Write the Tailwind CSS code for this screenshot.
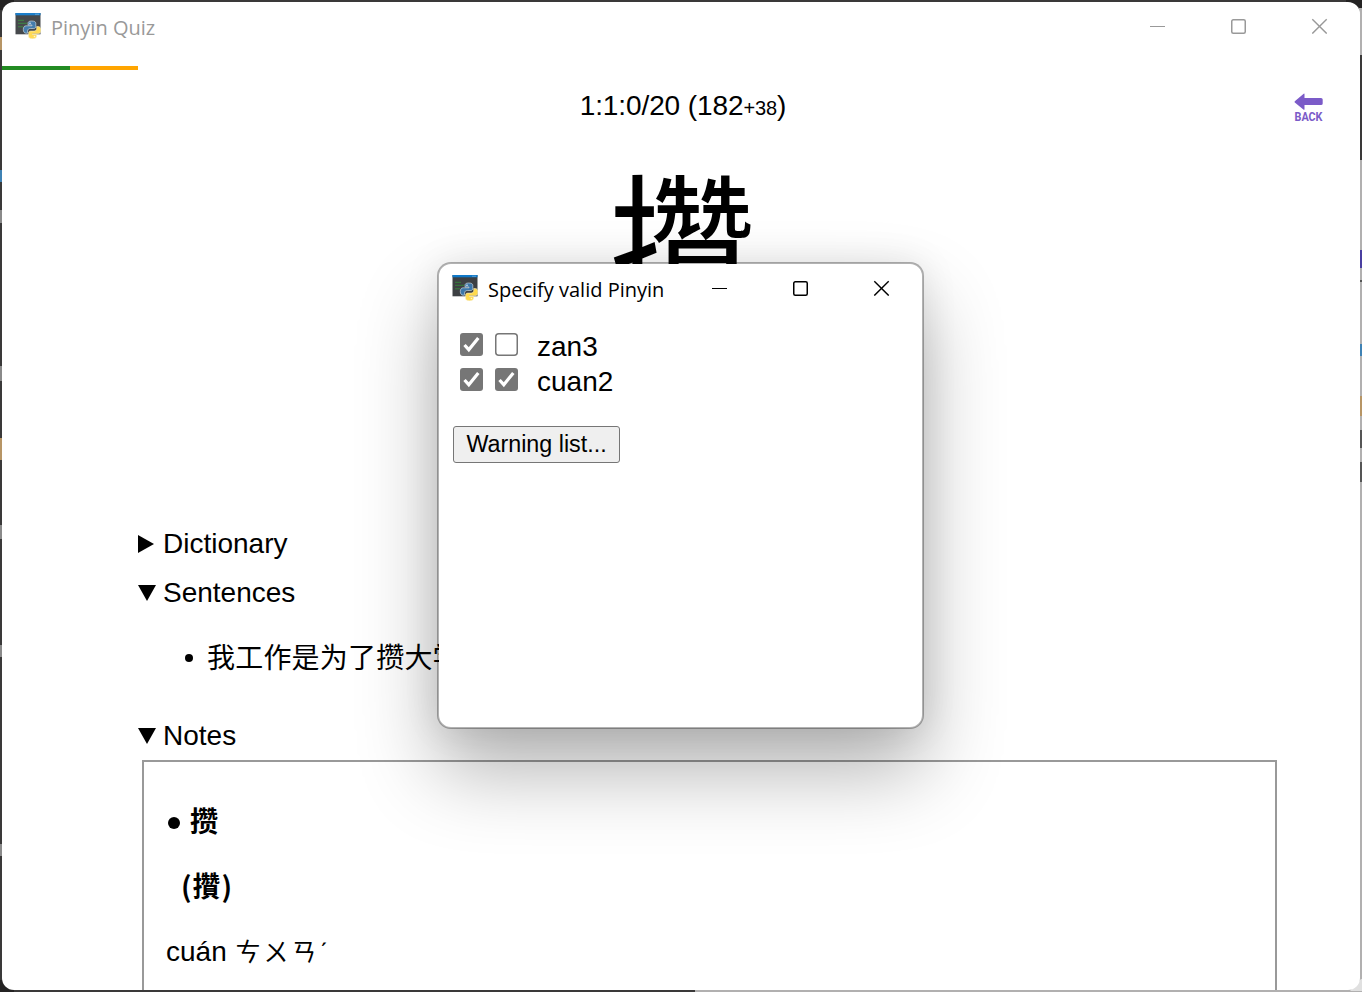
<!DOCTYPE html>
<html lang="en">
<head>
<meta charset="utf-8">
<title>Pinyin Quiz</title>
<script src="https://cdn.jsdelivr.net/npm/@tailwindcss/browser@4"></script>
</head>
<body class="relative h-[992px] w-[1362px] overflow-hidden bg-[#3a3939] p-[2px] font-['Liberation_Sans','Noto_Sans_CJK_SC',sans-serif] text-[28px] leading-8 text-black">
<svg class="absolute top-0 left-0" width="1362" height="992">
  <path fill="#242323" d="M0 0h14v10H0zM1346 0h16v12h-16zM0 980h14v12H0z"/>
  <path fill="#b1b0b0" d="M1359 8h3v47h-3zM1359 160h3v832h-3zM695 989h667v3H695z"/>
  <path fill="#e0e0e0" d="M1350 991h12v-12h-1z"/>
  <path fill="#b79565" d="M0 37h2v13H0zM0 438h2v22H0zM1360 396h2v20h-2z"/>
  <path fill="#3f82b4" d="M0 170h2v12H0zM1360 344h2v12h-2z"/>
  <path fill="#8a8a8a" d="M0 210h2v13H0zM0 366h2v15H0zM0 525h2v14H0zM0 645h2v12H0zM0 844h2v12H0z"/>
  <path fill="#4a3fa0" d="M1360 250h2v18h-2z"/>
  <path fill="#555" d="M1360 280h2v2h-2zM1360 430h2v18h-2zM1360 462h2v20h-2z"/>
</svg>
<svg class="hidden">
  <symbol id="app" viewBox="0 0 26 26">
    <path fill="#3d4043" d="M.5 0h25v21.300H.5z"/><path fill="#0f78c8" d="M.5 0h25v2.300H.5z"/>
    <path fill="#9cc8e8" d="M20.500.8h1v1h-1zM22.500.8h1v1h-1z"/>
    <path stroke="#35803a" fill="none" d="M3 7.300h6M3 10.300h9M3 13.800h5"/>
    <path fill="#3c76a8" stroke="#dbe8ee" stroke-width=".6" d="M16.500 8c-2.600 0-3.500 1-3.500 2.400V12h4v.8h-5.800c-2 0-2.900 1.500-2.900 3.700s1 3.700 2.700 3.700h1.600v-2.200c0-1.600 1.200-2.500 2.700-2.500h3.400c1.300 0 2.100-.8 2.100-2.100v-3c0-1.600-1.300-2.400-4.300-2.400z"/>
    <path fill="#ffd94c" stroke="#f7ecc0" stroke-width=".6" d="M17.500 25.700c2.600 0 4-1 4-2.400v-1.700h-4v-.8h5.500c2 0 2.800-1.500 2.800-3.700s-1-3.600-2.600-3.600h-1.500v2.100c0 1.600-1.100 2.500-2.600 2.500h-3.400c-1.300 0-2.100.8-2.100 2.100v3.100c0 1.500 1.300 2.400 3.900 2.400z"/>
    <circle cx="15" cy="10.200" r=".8" fill="#e8f2f8"/><circle cx="19.500" cy="23.500" r=".8" fill="#fff5cf"/>
  </symbol>
  <symbol id="controls" viewBox="0 0 178 16">
    <path fill="none" stroke="currentColor" d="M0 8.500h15"/>
    <rect x="81.750" y="1.750" width="13.500" height="13.500" rx="1.500" fill="none" stroke="currentColor" stroke-width="1.500"/>
    <path fill="none" stroke="currentColor" stroke-width="1.400" d="M162.300 1.200l14.400 14.400M176.700 1.200l-14.400 14.400"/>
  </symbol>
</svg>

<main class="relative h-[988px] w-[1358px] overflow-hidden rounded-xl bg-white">
  <header class="flex h-16 items-start pl-[13px] text-[#999]">
    <svg class="mt-[11px] size-[26px] opacity-95"><use href="#app"/></svg>
    <h1 class="mt-[10px] ml-[10px] font-['Open_Sans'] text-[20px] leading-8">Pinyin Quiz</h1>
    <svg class="mt-4 mr-[32px] ml-auto h-4 w-[178px]"><use href="#controls"/></svg>
  </header>
  <div class="flex h-1"><div class="w-[68px] bg-[#228b22]"></div><div class="w-[68px] bg-[#ffa500]"></div></div>
  <div class="grid h-[52px] grid-cols-[1fr_auto_1fr] pt-[20px] pl-[4px]">
    <p class="col-start-2 h-8 tracking-[-0.1px]">1:1:0/20 (182<span class="text-[20px]">+38</span>)</p>
    <button class="mr-[35px] h-10 w-[33px] justify-self-end pt-[2px]">
      <svg class="overflow-visible" width="33" height="36" viewBox="-2 0 33 36"><path fill="#7b5bc8" d="M.8 8.300 9.700.7q.8-.5.8.5V5h16.500q1.700 0 1.700 1.500v4q0 1.500-1.700 1.500H10.500v4.200q0 1-.8.500L.8 9.600q-.6-.7 0-1.300z"/><text x=".5" y="28" textLength="28" lengthAdjust="spacingAndGlyphs" font-family="Roboto" font-size="12.700" font-weight="700" fill="#7b5bc8">BACK</text></svg>
    </button>
  </div>
  <div class="h-[397px] pt-[32px] text-center font-['Noto_Sans_CJK_TC',sans-serif] text-[150px] leading-[160px] font-normal"><span class="inline-block translate-x-[2px] translate-y-[4px] scale-y-[1.03]">攢</span></div>
  <section class="pl-[136px]">
    <div class="flex h-[49px] items-center"><svg class="mr-[9px]" width="16" height="18"><path d="M0 0l16 9-16 9z"/></svg>Dictionary</div>
    <div class="flex h-[49px] items-center"><svg class="mr-[7px]" width="18" height="16"><path d="M0 0h18L9 16z"/></svg>Sentences</div>
    <div class="flex h-[82px] items-center pl-[47px]"><span class="mr-[14px] size-2 rounded-full bg-black"></span><span class="pt-[2px] tracking-[0.2px] whitespace-nowrap">我工作是为了攒大学</span></div>
    <div class="flex h-[73px] items-center"><svg class="mr-[7px]" width="18" height="16"><path d="M0 0h18L9 16z"/></svg>Notes</div>
    <div class="-mt-3 ml-1 h-[240px] w-[1135px] border-2 border-[#999] pt-[45px] pl-[22px]">
      <p class="flex h-8 items-center font-bold"><span class="mr-[10px] ml-[2px] size-3 rounded-full bg-black"></span>攒</p>
      <p class="mt-[30px] h-8 pl-[15px] font-['Noto_Sans_CJK_TC'] font-bold tracking-[1px]">(攢)</p>
      <p class="mt-[35px] h-8">cuán <span class="pl-px text-[25px] tracking-[3px]">ㄘㄨㄢˊ</span></p>
    </div>
  </section>
</main>

<section class="absolute top-[262px] left-[437px] h-[467px] w-[487px] rounded-[14px] border-2 border-black/30 bg-white bg-clip-padding shadow-[0_42px_80px_rgba(0,0,0,0.30),0_0px_36px_rgba(0,0,0,0.09)]">
  <header class="flex h-[65px] items-start pl-[13px]">
    <svg class="mt-[11px] size-[26px]"><use href="#app"/></svg>
    <h2 class="mt-[10px] ml-[10px] font-['Open_Sans'] text-[20px] leading-8 whitespace-nowrap">Specify valid Pinyin</h2>
    <svg class="mt-4 mr-[32px] ml-auto h-4 w-[178px]"><use href="#controls"/></svg>
  </header>
  <div class="space-y-[3px] pl-[21px]">
    <div class="flex h-8 items-start">
      <svg class="mt-1 mr-3" width="23" height="23"><rect width="23" height="23" rx="3" fill="#767676"/><path d="M4.500 12l4.300 4.700L18.300 5" fill="none" stroke="white" stroke-width="3.200"/></svg>
      <svg class="mt-1 mr-[19px]" width="23" height="23"><rect x=".75" y=".75" width="21.500" height="21.500" rx="3" fill="white" stroke="#767676" stroke-width="1.500"/></svg>
      <span class="pt-[2px]">zan3</span>
    </div>
    <div class="flex h-8 items-start">
      <svg class="mt-1 mr-3" width="23" height="23"><rect width="23" height="23" rx="3" fill="#767676"/><path d="M4.500 12l4.300 4.700L18.300 5" fill="none" stroke="white" stroke-width="3.200"/></svg>
      <svg class="mt-1 mr-[19px]" width="23" height="23"><rect width="23" height="23" rx="3" fill="#767676"/><path d="M4.500 12l4.300 4.700L18.300 5" fill="none" stroke="white" stroke-width="3.200"/></svg>
      <span class="pt-[2px]">cuan2</span>
    </div>
  </div>
  <button class="mt-[30px] ml-[14px] flex h-[37px] w-[167px] items-center justify-center rounded-[3px] border border-[#767676] bg-[#efefef] pb-[2px] text-[23.300px] leading-6 whitespace-nowrap">Warning list...</button>
</section>
</body>
</html>
